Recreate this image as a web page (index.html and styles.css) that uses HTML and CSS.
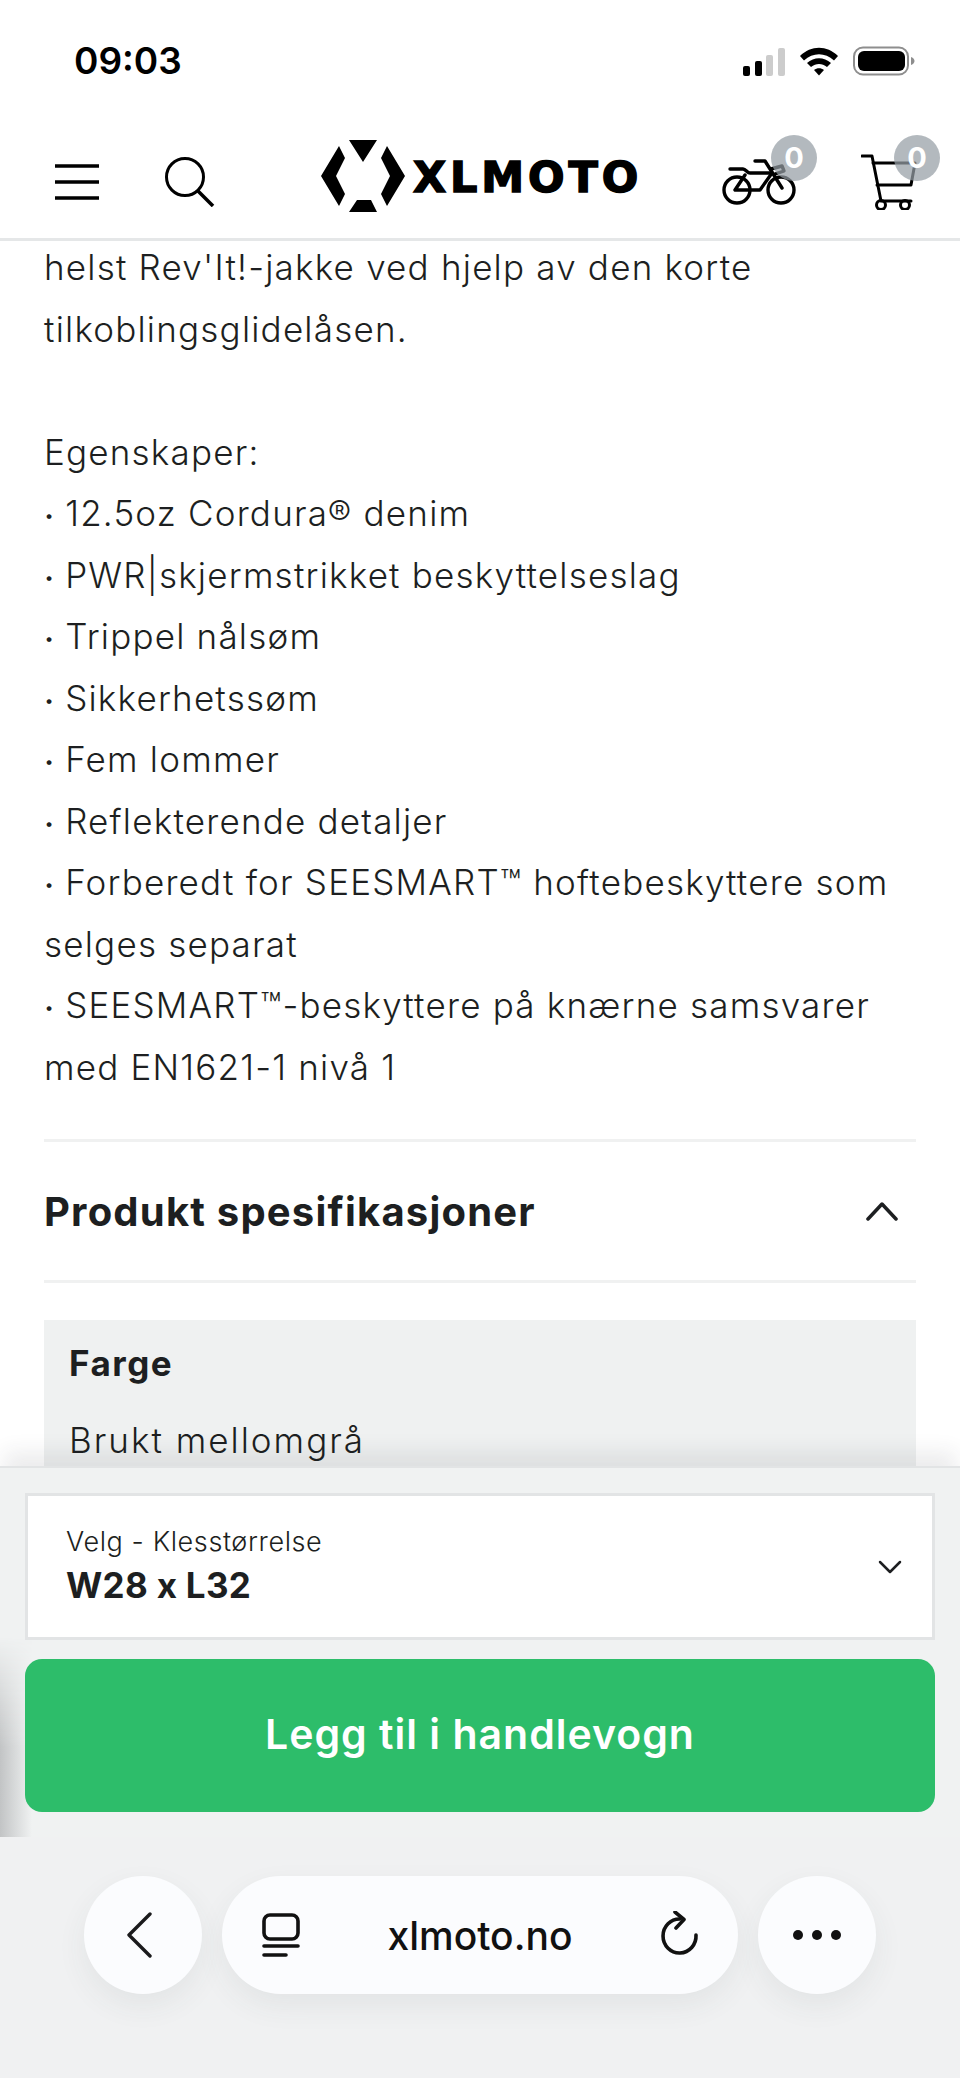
FILE: index.html
```html
<!DOCTYPE html>
<html lang="no">
<head>
  <meta charset="UTF-8" />
  <meta name="viewport" content="width=device-width, initial-scale=1.0" />
  <title>XLMOTO</title>
  <link rel="stylesheet" href="styles.css">
</head>
<body>
  <div class="phone">
    <div class="status-bar">
      <span class="clock">09:03</span>
      <div class="status-icons">
        <svg class="signal" viewBox="0 0 42 28" width="42" height="28">
          <rect x="0" y="18" width="7" height="10" rx="2" fill="#000"/>
          <rect x="12" y="13" width="7" height="15" rx="2" fill="#000"/>
          <rect x="23" y="7" width="7" height="21" rx="2" fill="#ccc"/>
          <rect x="35" y="0" width="7" height="28" rx="2" fill="#ccc"/>
        </svg>
        <svg class="wifi" viewBox="0 0 40 30" width="40" height="30">
          <path d="M1 10 C12 -1 28 -1 39 10 L35 14.500 C26 6 14 6 5 14.500 Z" fill="#000"/>
          <path d="M8 17 C15 10.500 25 10.500 32 17 L28 21 C23 17 17 17 12 21 Z" fill="#000"/>
          <path d="M15 24 C18 21.500 22 21.500 25 24 L20 29.500 Z" fill="#000"/>
        </svg>
        <svg class="battery" viewBox="0 0 62 30" width="62" height="30">
          <rect x="1" y="1.500" width="54" height="27" rx="9" fill="none" stroke="#8e8e8e" stroke-width="2"/>
          <rect x="5" y="5" width="47" height="20" rx="6" fill="#000"/>
          <path d="M58 11 C60.500 12 61.500 13.500 61.500 15 C61.500 16.500 60.500 18 58 19 Z" fill="#8e8e8e"/>
        </svg>
      </div>
    </div>

    <header class="site-header">
      <button class="icon-btn menu-btn" aria-label="Meny">
        <svg viewBox="0 0 44 36" width="44" height="36">
          <path d="M0 2 H44 M0 18 H44 M0 34 H44" stroke="#000" stroke-width="3.500" fill="none"/>
        </svg>
      </button>
      <button class="icon-btn search-btn" aria-label="Søk">
        <svg viewBox="0 0 50 50" width="50" height="50">
          <circle cx="20" cy="20" r="18.500" stroke="#000" stroke-width="3" fill="none"/>
          <path d="M32 33 L48 49" stroke="#000" stroke-width="3.500" fill="none"/>
        </svg>
      </button>
      <div class="logo">
        <svg viewBox="0 0 84 72" width="84" height="72">
          <path d="M28 0 H56 L42 22 Z M28 72 L36 60 H50 L56 72 Z" fill="#000"/>
          <path d="M0 36 L18 6 L24 18 L15 36 L24 54 L18 66 Z" fill="#000"/>
          <path d="M84 36 L66 6 L60 18 L69 36 L60 54 L66 66 Z" fill="#000"/>
        </svg>
        <span class="logo-text">XLMOTO</span>
      </div>
      <div class="header-icon bike">
        <svg viewBox="0 0 76 48" width="76" height="48">
          <g fill="none" stroke="#000" stroke-width="3.400" stroke-linecap="round" stroke-linejoin="round">
            <circle cx="15" cy="32" r="13"/>
            <circle cx="59" cy="32" r="13"/>
            <path d="M8 11 H21 C24 11 25 15 28 15 H48"/>
            <path d="M33 3 H43 L60 30"/>
            <path d="M23 17 L13 32 H38 L50 15"/>
            <path d="M49 11 L60 8 L62 13 L53 16"/>
          </g>
        </svg>
        <span class="badge">0</span>
      </div>
      <div class="header-icon cart">
        <svg viewBox="0 0 56 56" width="56" height="56">
          <g fill="none" stroke="#000" stroke-width="3" stroke-linecap="round" stroke-linejoin="round">
            <path d="M1 2 H11 L20 47 H50"/>
            <path d="M12 9 H54 L50 31 H16"/>
            <circle cx="20" cy="51" r="4.500"/>
            <circle cx="44" cy="51" r="4.500"/>
          </g>
        </svg>
        <span class="badge">0</span>
      </div>
    </header>

    <main class="content">
      <div class="description">
        <div>helst Rev'It!-jakke ved hjelp av den korte</div>
        <div>tilkoblingsglidelåsen.</div>
        <div>&nbsp;</div>
        <div>Egenskaper:</div>
        <div><span class="bullet">•</span> 12.5oz Cordura® denim</div>
        <div><span class="bullet">•</span> PWR|skjermstrikket beskyttelseslag</div>
        <div><span class="bullet">•</span> Trippel nålsøm</div>
        <div><span class="bullet">•</span> Sikkerhetssøm</div>
        <div><span class="bullet">•</span> Fem lommer</div>
        <div><span class="bullet">•</span> Reflekterende detaljer</div>
        <div><span class="bullet">•</span> Forberedt for SEESMART™ hoftebeskyttere som</div>
        <div>selges separat</div>
        <div><span class="bullet">•</span> SEESMART™-beskyttere på knærne samsvarer</div>
        <div>med EN1621-1 nivå 1</div>
      </div>
      <div class="accordion-head">
        <h2>Produkt spesifikasjoner</h2>
        <svg viewBox="0 0 32 20" width="32" height="20">
          <path d="M2 18 L16 3 L30 18" fill="none" stroke="#1d1f21" stroke-width="3.500" stroke-linecap="round" stroke-linejoin="round"/>
        </svg>
      </div>
      <div class="spec-row">
        <div class="spec-label">Farge</div>
        <div class="spec-value">Brukt mellomgrå</div>
      </div>
    </main>

    <section class="buy-panel">
      <div class="size-select">
        <div class="size-text">
          <div class="size-label">Velg - Klesstørrelse</div>
          <div class="size-value">W28 x L32</div>
        </div>
        <svg viewBox="0 0 24 14" width="24" height="14">
          <path d="M2 2 L12 12 L22 2" fill="none" stroke="#1d1f21" stroke-width="2.500" stroke-linecap="round" stroke-linejoin="round"/>
        </svg>
      </div>
      <button class="add-btn">Legg til i handlevogn</button>
    </section>

    <nav class="browser-bar">
      <button class="pill round back-btn" aria-label="Tilbake">
        <svg viewBox="0 0 26 46" width="26" height="46">
          <path d="M24 2 L3 23 L24 44" fill="none" stroke="#1a1a1c" stroke-width="3.400" stroke-linecap="round" stroke-linejoin="round"/>
        </svg>
      </button>
      <div class="pill url-pill">
        <svg viewBox="0 0 38 44" width="38" height="44">
          <rect x="2" y="2" width="34" height="24" rx="6" fill="none" stroke="#111" stroke-width="3.600"/>
          <path d="M2 33 H36 M2 42 H24" stroke="#111" stroke-width="3.600" stroke-linecap="round" fill="none"/>
        </svg>
        <span class="url">xlmoto.no</span>
        <svg viewBox="0 0 40 48" width="40" height="48">
          <path d="M36 24 A16.500 17 0 1 1 20 8" fill="none" stroke="#111" stroke-width="3.600" stroke-linecap="round"/>
          <path d="M15 1 L24 8.500 L16 17" fill="none" stroke="#111" stroke-width="3.600" stroke-linecap="round" stroke-linejoin="round"/>
        </svg>
      </div>
      <button class="pill round" aria-label="Mer">
        <svg viewBox="0 0 50 12" width="50" height="12">
          <circle cx="6" cy="6" r="5" fill="#111"/>
          <circle cx="25" cy="6" r="5" fill="#111"/>
          <circle cx="44" cy="6" r="5" fill="#111"/>
        </svg>
      </button>
    </nav>
  </div>
</body>
</html>
```

FILE: styles.css
```css
html, body {
  margin: 0;
  padding: 0;
}
body {
  font-family: Inter, "Liberation Sans", sans-serif;
  color: #1d1f21;
  background: #fff;
}
button {
  font-family: inherit;
  border: 0;
  padding: 0;
  background: none;
}
.phone {
  width: 960px;
  height: 2078px;
  display: flex;
  flex-direction: column;
  overflow: hidden;
}

/* status bar */
.status-bar {
  height: 122px;
  flex: none;
  display: flex;
  justify-content: space-between;
  align-items: flex-start;
  padding: 38px 45px 0 74px;
  box-sizing: border-box;
}
.clock {
  font-family: Inter, sans-serif;
  font-size: 37px;
  line-height: 46px;
  font-weight: 600;
  color: #000;
}
.status-icons {
  display: flex;
  align-items: flex-end;
  gap: 14px;
  padding-top: 8px;
}

/* site header */
.site-header {
  height: 119px;
  flex: none;
  box-sizing: border-box;
  display: flex;
  align-items: flex-start;
  border-bottom: 3px solid #e5e7e8;
  padding: 0 43px 0 55px;
}
.icon-btn {
  display: flex;
}
.menu-btn {
  margin-top: 42px;
}
.search-btn {
  margin: 35px 0 0 66px;
}
.logo {
  display: flex;
  align-items: center;
  gap: 8px;
  margin: 18px 0 0 106px;
}
.logo-text {
  font-family: "DejaVu Sans", sans-serif;
  font-weight: 700;
  font-size: 43px;
  line-height: 44px;
  letter-spacing: 3.900px;
  color: #000;
  -webkit-text-stroke: 1.500px #000;
  padding-top: 2px;
}
.header-icon {
  position: relative;
  display: flex;
}
.bike {
  margin: 36px 0 0 auto;
}
.cart {
  margin: 32px 0 0 63px;
}
.badge {
  position: absolute;
  width: 46px;
  height: 46px;
  border-radius: 50%;
  background: rgba(150, 158, 165, 0.72);
  color: #fff;
  font-size: 29px;
  font-weight: 700;
  line-height: 46px;
  text-align: center;
}
.bike .badge {
  left: 49px;
  top: -23px;
}
.cart .badge {
  left: 33px;
  top: -19px;
}

/* page content */
.content {
  flex: 1;
  min-height: 0;
  padding: 0 44px;
  overflow: hidden;
}
.description {
  margin-top: -4px;
  font-size: 35px;
  font-weight: 300;
  line-height: 61.500px;
  letter-spacing: 1.200px;
  white-space: nowrap;
}
.bullet {
  font-size: 18px;
  line-height: 0;
  vertical-align: 4px;
  letter-spacing: 0;
}
.accordion-head {
  margin-top: 41px;
  height: 144px;
  display: flex;
  justify-content: space-between;
  align-items: center;
  padding-right: 18px;
  border-top: 3px solid #f0f1f1;
  border-bottom: 3px solid #f0f1f1;
  box-sizing: border-box;
}
.accordion-head h2 {
  margin: 0;
  font-size: 40px;
  font-weight: 700;
  letter-spacing: 1.200px;
}
.spec-row {
  margin-top: 37px;
  padding: 18px 25px;
  background: #eff1f1;
  height: 200px;
  font-size: 35px;
}
.spec-label {
  font-weight: 700;
  line-height: 50px;
  letter-spacing: 1.500px;
}
.spec-value {
  font-weight: 300;
  line-height: 50px;
  margin-top: 27px;
  letter-spacing: 2px;
}

/* buy panel */
.buy-panel {
  position: relative;
  flex: none;
  height: 371px;
  padding: 25px 25px 0;
  box-sizing: border-box;
  background: #f0f2f2;
  border-top: 2px solid #e2e4e5;
  box-shadow: 0 -18px 20px -4px rgba(40, 45, 50, 0.09);
}
.buy-panel::before {
  content: "";
  position: absolute;
  left: 0;
  bottom: 0;
  width: 32px;
  height: 200px;
  background: linear-gradient(to right, #c2c4c5, #f0f2f2);
  -webkit-mask-image: linear-gradient(to bottom, transparent, #000 55%);
  mask-image: linear-gradient(to bottom, transparent, #000 55%);
}
.size-select {
  position: relative;
  height: 147px;
  box-sizing: border-box;
  background: #fff;
  border: 3px solid #e2e4e5;
  display: flex;
  justify-content: space-between;
  align-items: center;
  padding: 0 30px 0 38px;
}
.size-text {
  padding-bottom: 3px;
}
.size-label {
  font-size: 27px;
  font-weight: 300;
  line-height: 40px;
  letter-spacing: 0.600px;
}
.size-value {
  font-size: 35px;
  font-weight: 700;
  line-height: 46px;
  letter-spacing: 0.300px;
}
.add-btn {
  position: relative;
  display: block;
  width: 100%;
  height: 153px;
  margin-top: 19px;
  padding-bottom: 4px;
  background: #2dbd6a;
  border-radius: 17px;
  color: #fff;
  font-size: 41px;
  font-weight: 600;
  letter-spacing: 1px;
}

/* browser toolbar */
.browser-bar {
  flex: none;
  height: 241px;
  padding: 39px 84px 0;
  box-sizing: border-box;
  display: flex;
  align-items: flex-start;
  gap: 20px;
  background: #f0f1f2;
}
.pill {
  height: 118px;
  background: #fbfcfe;
  border-radius: 59px;
  box-shadow: 0 12px 30px rgba(60, 65, 70, 0.07);
  display: flex;
  align-items: center;
  justify-content: center;
}
.round {
  width: 118px;
  flex: none;
}
.back-btn {
  padding-right: 8px;
}
.url-pill {
  flex: 1;
  justify-content: space-between;
  padding: 0 38px 0 40px;
}
.url {
  font-family: Inter, sans-serif;
  font-weight: 500;
  font-size: 39px;
  color: #111;
}
```
